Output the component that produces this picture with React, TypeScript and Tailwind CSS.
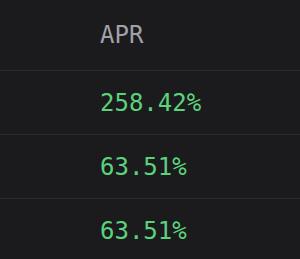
const rows = ['258.42%', '63.51%', '63.51%']

export default function App() {
  return (
    <div className="w-[300px] h-[259px] overflow-hidden bg-[#1b1b1d] font-['DejaVu_Sans_Mono',monospace]">
      <div className="h-[71px] flex items-center pl-[100px] border-b border-[#2c2c2f]">
        <span className="text-[24px] text-[#a1a1a9]">APR</span>
      </div>
      {rows.map((apr, i) => (
        <div
          key={i}
          className="h-[64px] flex items-center pl-[100px] border-b border-[#2c2c2f]"
        >
          <span className="text-[24px] text-[#5bd27c]">{apr}</span>
        </div>
      ))}
    </div>
  )
}
